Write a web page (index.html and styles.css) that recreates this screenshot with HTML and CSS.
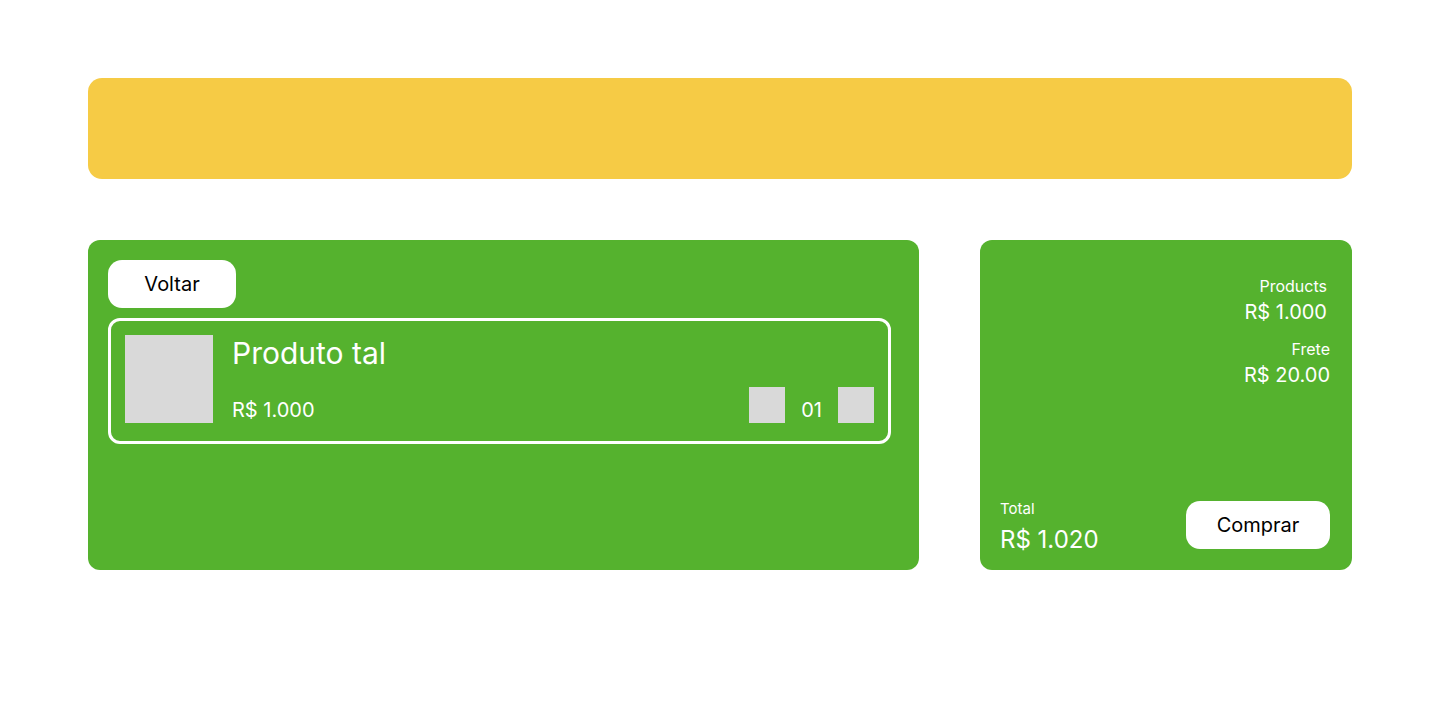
FILE: index.html
```html
<!DOCTYPE html>
<html lang="pt">
<head>
<meta charset="utf-8">
<title>Carrinho</title>
<link rel="stylesheet" href="styles.css">
</head>
<body>
<div class="page">
  <header class="topbar"></header>
  <main class="content">
    <section class="cart">
      <button class="btn btn-back">Voltar</button>
      <div class="item">
        <div class="item-img"></div>
        <div class="item-info">
          <div class="item-title">Produto tal</div>
          <div class="item-bottom">
            <span class="item-price">R$ 1.000</span>
            <div class="qty">
              <span class="qty-btn"></span>
              <span class="qty-val">01</span>
              <span class="qty-btn"></span>
            </div>
          </div>
        </div>
      </div>
    </section>
    <aside class="summary">
      <div class="summary-lines">
        <div class="line line-products">
          <span class="line-label">Products</span>
          <span class="line-value">R$ 1.000</span>
        </div>
        <div class="line">
          <span class="line-label">Frete</span>
          <span class="line-value">R$ 20.00</span>
        </div>
      </div>
      <div class="summary-foot">
        <div class="total">
          <span class="total-label">Total</span>
          <span class="total-value">R$ 1.020</span>
        </div>
        <button class="btn btn-buy">Comprar</button>
      </div>
    </aside>
  </main>
</div>
</body>
</html>
```

FILE: styles.css
```css
* { box-sizing: border-box; }
html, body { margin: 0; padding: 0; background: #fff; }
body { font-family: Inter, "Noto Sans", sans-serif; color: #fff; font-weight: 400; }

.page { padding: 78px 88px 0; width: 1440px; }

.topbar {
  height: 101px;
  background: #F6CB45;
  border-radius: 14px;
}

.content {
  display: flex;
  gap: 61px;
  margin-top: 61px;
}

.cart {
  width: 831px;
  height: 330px;
  background: #55B22E;
  border-radius: 12px;
  padding: 20px;
  display: flex;
  flex-direction: column;
  align-items: flex-start;
  gap: 10px;
}

.btn {
  border: 0;
  background: #fff;
  color: #000;
  font-family: Inter, "Noto Sans", sans-serif;
  font-weight: 400;
  font-size: 20px;
  border-radius: 14px;
  height: 48px;
  padding: 0;
  cursor: pointer;
}
.btn-back { width: 128px; }
.btn-buy { width: 144px; margin-bottom: 5px; }

.item {
  width: 783px;
  height: 126px;
  border: 3px solid #fff;
  border-radius: 12px;
  padding: 14px 14px 18px 14px;
  display: flex;
  gap: 19px;
}
.item-img {
  width: 88px;
  height: 88px;
  background: #D9D9D9;
  flex: none;
}
.item-info {
  flex: 1;
  display: flex;
  flex-direction: column;
  justify-content: space-between;
}
.item-title { font-size: 30px; line-height: 36px; }
.item-bottom {
  display: flex;
  justify-content: space-between;
  align-items: flex-end;
}
.item-price { font-size: 20px; line-height: 24px; margin-bottom: 1px; }
.qty { display: flex; align-items: flex-end; gap: 16px; }
.qty-btn { width: 36px; height: 36px; background: #D9D9D9; display: block; }
.qty-val { font-size: 20px; line-height: 24px; margin-bottom: 1px; }

.summary {
  width: 372px;
  height: 330px;
  background: #55B22E;
  border-radius: 12px;
  padding: 36px 22px 16px 20px;
  display: flex;
  flex-direction: column;
  justify-content: space-between;
}
.summary-lines { display: flex; flex-direction: column; gap: 15px; align-items: flex-end; }
.line { display: flex; flex-direction: column; align-items: flex-end; gap: 4px; }
.line-products { padding-right: 3px; }
.line-label { font-size: 16px; line-height: 20px; }
.line-value { font-size: 20px; line-height: 24px; }

.summary-foot {
  display: flex;
  justify-content: space-between;
  align-items: flex-end;
}
.total { display: flex; flex-direction: column; gap: 7px; }
.total-label { font-size: 15px; line-height: 18px; }
.total-value { font-size: 24px; line-height: 29px; }
```
